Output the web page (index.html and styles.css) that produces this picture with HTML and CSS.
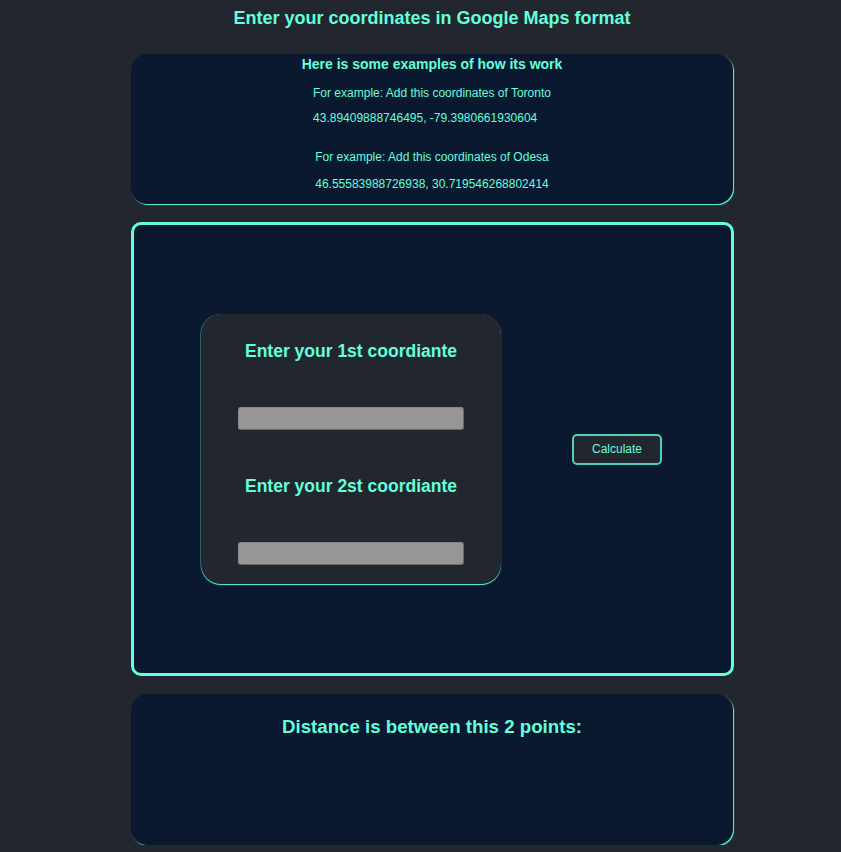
FILE: index.html
```html
<!DOCTYPE html>
<html lang="en">
<head>
<meta charset="utf-8">
<title>Distance calculator</title>
<link rel="stylesheet" href="styles.css">
</head>
<body>
<div class="page">
  <h1 class="title">Enter your coordinates in Google Maps format</h1>
  <section class="panel examples">
    <h2 class="examples-title">Here is some examples of how its work</h2>
    <div class="example example-left">
      <p>For example: Add this coordinates of Toronto</p>
      <p>43.89409888746495, -79.3980661930604</p>
    </div>
    <div class="example example-center">
      <p>For example: Add this coordinates of Odesa</p>
      <p>46.55583988726938, 30.719546268802414</p>
    </div>
  </section>
  <section class="panel main">
    <div class="card">
      <h3 class="card-title">Enter your 1st coordiante</h3>
      <input class="field" type="text">
      <h3 class="card-title second">Enter your 2st coordiante</h3>
      <input class="field" type="text">
    </div>
    <button class="calc">Calculate</button>
  </section>
  <section class="panel result">
    <h2 class="result-title">Distance is between this 2 points:</h2>
  </section>
</div>
</body>
</html>
```
FILE: styles.css
```css
html, body {
  margin: 0;
  padding: 0;
  background: #22262f;
}
body {
  font-family: "Liberation Sans", Arial, sans-serif;
  color: #64ffda;
}
.page {
  width: 602px;
  margin: 0 auto;
  padding-left: 23px;
  padding-top: 1px;
}
.title {
  margin: 7px 0 0;
  height: 46px;
  font-size: 18px;
  font-weight: bold;
  text-align: center;
  line-height: 20px;
}
.panel {
  background: #0a192f;
  border-radius: 16px;
  box-shadow: 1px 1px 1px #64ffda;
}
.examples {
  height: 150px;
  box-sizing: border-box;
  padding-top: 2px;
  text-align: center;
  font-size: 12px;
}
.examples-title {
  font-size: 14px;
  font-weight: bold;
  margin: 0;
  line-height: 16px;
}
.example p {
  margin: 0;
  line-height: 14px;
}
.example-left {
  width: fit-content;
  margin: 14px auto 0;
  text-align: left;
}
.example-left p + p {
  margin-top: 11px;
}
.example-center {
  margin-top: 25px;
}
.example-center p + p {
  margin-top: 13px;
}
.main {
  margin-top: 18px;
  margin-right: -1px;
  height: 454px;
  box-sizing: border-box;
  border: 3px solid #64ffda;
  border-radius: 10px;
  box-shadow: none;
  display: flex;
  align-items: center;
  justify-content: space-evenly;
  padding-right: 2px;
}
.card {
  width: 300px;
  height: 270px;
  box-sizing: border-box;
  background: #22262f;
  border-radius: 20px;
  box-shadow: 0 1px 1px #64ffda, -0.5px 0 0.5px rgba(100,255,218,0.5);
  display: flex;
  flex-direction: column;
  align-items: center;
  padding-top: 27px;
}
.card-title {
  margin: 0;
  font-size: 17.5px;
  font-weight: bold;
  line-height: 20px;
}
.card-title.second {
  margin-top: 46px;
}
.field {
  margin-top: 46px;
  width: 226px;
  height: 23px;
  box-sizing: border-box;
  background: #979595;
  border: 1px solid #6b6a6a;
  border-top-color: #8a8888;
  border-left-color: #8a8888;
  border-radius: 3px;
  padding: 0;
}
.calc {
  width: 90px;
  height: 31px;
  margin-left: 4px;
  box-sizing: border-box;
  background: #22262f;
  color: #64ffda;
  border: 2px solid #4fd1b3;
  border-radius: 5px;
  font-family: "Liberation Sans", Arial, sans-serif;
  font-size: 12px;
  padding: 0;
}
.result {
  margin-top: 18px;
  height: 151px;
  box-sizing: border-box;
  padding-top: 22px;
  text-align: center;
}
.result-title {
  margin: 0;
  font-size: 18.7px;
  font-weight: bold;
  line-height: 22px;
}
```
